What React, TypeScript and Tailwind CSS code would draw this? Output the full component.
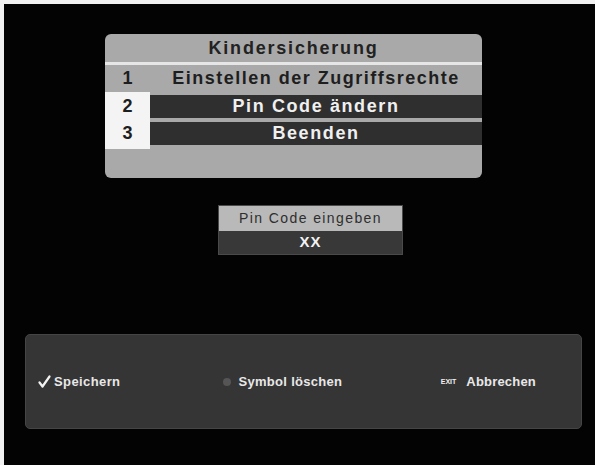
import React from "react";

const font = { fontFamily: '"Liberation Sans", Arial, sans-serif' };

function MenuRow({ n, label, active }: { n: string; label: string; active?: boolean }) {
  if (!active) {
    return (
      <div className="flex h-[27px] items-center">
        <div className="w-[45px] text-center text-[18px] font-bold text-[#1e1e1e]">{n}</div>
        <div className="flex-1 text-center text-[18px] font-bold tracking-[1.5px] text-[#1e1e1e]">{label}</div>
      </div>
    );
  }
  return (
    <div className="flex h-[27px] items-stretch">
      <div className="flex w-[45px] items-center justify-center bg-[#f4f4f4] text-[18px] font-bold text-[#1e1e1e]">
        {n}
      </div>
      <div className="flex flex-1 items-center py-[2px]">
        <div className="flex h-full w-full items-center justify-center bg-[#2f2f2f] text-[18px] font-bold tracking-[1.6px] text-[#f0f0f0]">
          {label}
        </div>
      </div>
    </div>
  );
}

export default function App() {
  return (
    <div className="h-[465px] w-[595px] bg-[#f2f2f2] pl-[4px] pt-[4px]" style={font}>
      <div className="flex h-full w-full flex-col bg-[#030303]">
        {/* Kindersicherung menu */}
        <div className="ml-[101px] mt-[30px] h-[144px] w-[377px] overflow-hidden rounded-[6px] bg-[#a9a9a9]">
          <div className="flex h-[28px] items-center justify-center text-[18px] font-bold tracking-[1.8px] text-[#222]">
            Kindersicherung
          </div>
          <div className="h-[3px] bg-[#e6e6e6]" />
          <MenuRow n="1" label="Einstellen der Zugriffsrechte" />
          <div className="flex">
            <div className="w-[45px] bg-[#f4f4f4]" />
            <div className="flex-1 h-[1px]" />
          </div>
          <MenuRow n="2" label="Pin Code ändern" active />
          <MenuRow n="3" label="Beenden" active />
          <div className="flex h-[2px]">
            <div className="w-[45px] bg-[#f4f4f4]" />
          </div>
        </div>

        {/* Pin entry */}
        <div className="ml-[214px] mt-[27px] w-[185px] border border-[#4a4a4a]">
          <div className="flex h-[25px] items-center justify-center bg-[#b9b9b9] text-[14px] tracking-[1.4px] text-[#2e2e2e]">
            Pin Code eingeben
          </div>
          <div className="flex h-[23px] items-center justify-center bg-[#383838] text-[15px] font-bold tracking-[1px] text-[#f2f2f2]">
            XX
          </div>
        </div>

        {/* Bottom help bar */}
        <div className="ml-[21px] mt-[79px] flex h-[95px] w-[557px] items-center rounded-[5px] border border-[#454545] bg-[#353535] text-[13px] font-bold text-[#e8e8e8]">
          <div className="ml-[12px] flex items-center gap-[3px]">
            <svg width="13" height="13" viewBox="0 0 13 13">
              <path d="M1.5 7.5 L4.5 11.5 L11.5 1.5" fill="none" stroke="#f2f2f2" strokeWidth="2.2" strokeLinecap="round" strokeLinejoin="round" />
            </svg>
            <span className="tracking-[0.4px]">Speichern</span>
          </div>
          <div className="ml-[103px] flex items-center gap-[7px]">
            <span className="inline-block h-[8px] w-[8px] rounded-full bg-[#555]" />
            <span className="tracking-[0.3px]">Symbol löschen</span>
          </div>
          <div className="ml-auto mr-[45px] flex items-center gap-[10px]">
            <span className="text-[7px] font-bold leading-none text-[#f0f0f0]">EXIT</span>
            <span className="tracking-[0.2px]">Abbrechen</span>
          </div>
        </div>
      </div>
    </div>
  );
}
